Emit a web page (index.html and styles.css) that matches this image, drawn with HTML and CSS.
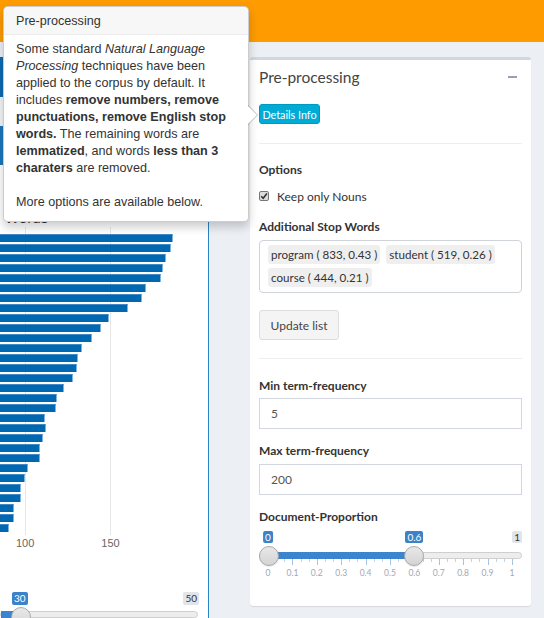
FILE: index.html
```html
<!DOCTYPE html>
<html lang="en">
<head>
<meta charset="utf-8">
<title>Pre-processing</title>
<link rel="stylesheet" href="styles.css">
</head>
<body>
<header class="topbar"></header>
<main class="content">
  <section class="lbox">
    <div class="lbox-head"></div>
    <div class="lbox-strip"></div>
    <div class="lbox-tab"></div>
    <div class="chart">
      <div class="chart-title">Words</div>
      <div class="plot">
        <div class="bar" style="width:173px"></div>
        <div class="bar" style="width:171px"></div>
        <div class="bar" style="width:166px"></div>
        <div class="bar" style="width:163px"></div>
        <div class="bar" style="width:161px"></div>
        <div class="bar" style="width:146px"></div>
        <div class="bar" style="width:142px"></div>
        <div class="bar" style="width:128px"></div>
        <div class="bar" style="width:109px"></div>
        <div class="bar" style="width:101px"></div>
        <div class="bar" style="width:92px"></div>
        <div class="bar" style="width:82px"></div>
        <div class="bar" style="width:78px"></div>
        <div class="bar" style="width:77px"></div>
        <div class="bar" style="width:73px"></div>
        <div class="bar" style="width:64px"></div>
        <div class="bar" style="width:57px"></div>
        <div class="bar" style="width:56px"></div>
        <div class="bar" style="width:45px"></div>
        <div class="bar" style="width:46px"></div>
        <div class="bar" style="width:43px"></div>
        <div class="bar" style="width:40px"></div>
        <div class="bar" style="width:40px"></div>
        <div class="bar" style="width:28px"></div>
        <div class="bar" style="width:25px"></div>
        <div class="bar" style="width:21px"></div>
        <div class="bar" style="width:21px"></div>
        <div class="bar" style="width:14px"></div>
        <div class="bar" style="width:14px"></div>
        <div class="bar" style="width:9px"></div>
      </div>
      <div class="axis"><span>100</span><span>150</span></div>
    </div>
    <div class="ls">
      <div class="ls-labels"><span class="lab-blue">30</span><span class="lab-gray">50</span></div>
      <div class="ls-track">
        <div class="ls-fill"></div>
        <div class="ls-handle"></div>
      </div>
    </div>
  </section>

  <section class="rbox">
    <div class="rbox-head">
      <h3 class="rbox-title">Pre-processing</h3>
      <span class="minus"></span>
    </div>
    <div class="rbox-body">
      <button class="btn-info">Details Info</button>
      <hr class="sep sep1">
      <div class="lbl lbl-options">Options</div>
      <div class="check-row">
        <span class="checkbox"><svg viewBox="0 0 10 10" width="10" height="10"><path d="M2.2 5.2 L4.2 7.3 L7.9 2.6" fill="none" stroke="#333" stroke-width="1.6"/></svg></span>
        <span>Keep only Nouns</span>
      </div>
      <div class="lbl lbl-stop">Additional Stop Words</div>
      <div class="selectize">
        <span class="item">program ( 833, 0.43 )</span>
        <span class="item">student ( 519, 0.26 )</span>
        <span class="item">course ( 444, 0.21 )</span>
      </div>
      <button class="btn-default">Update list</button>
      <hr class="sep sep2">
      <div class="lbl lbl-min">Min term-frequency</div>
      <div class="input input-min">5</div>
      <div class="lbl lbl-max">Max term-frequency</div>
      <div class="input input-max">200</div>
      <div class="lbl lbl-doc">Document-Proportion</div>
      <div class="rs">
        <div class="rs-labels">
          <div class="rs-scale">
            <span class="rs-lab rs-lab-blue" style="left:0%">0</span>
            <span class="rs-lab rs-lab-blue" style="left:60%">0.6</span>
            <span class="rs-lab rs-lab-max">1</span>
          </div>
        </div>
        <div class="rs-track">
          <div class="rs-scale">
            <div class="rs-fill" style="left:0%;width:60%"></div>
            <div class="rs-handle" style="left:0%"></div>
            <div class="rs-handle" style="left:60%"></div>
          </div>
        </div>
        <div class="rs-ticks"></div>
        <div class="rs-nums">
          <span>0</span><span>0.1</span><span>0.2</span><span>0.3</span><span>0.4</span><span>0.5</span><span>0.6</span><span>0.7</span><span>0.8</span><span>0.9</span><span>1</span>
        </div>
      </div>
    </div>
  </section>
</main>

<div class="popover">
  <div class="popover-title">Pre-processing</div>
  <div class="popover-content">
    Some standard <i>Natural Language</i><br>
    <i>Processing</i> techniques have been<br>
    applied to the corpus by default. It<br>
    includes <b>remove numbers, remove</b><br>
    <b>punctuations, remove English stop</b><br>
    <b>words.</b> The remaining words are<br>
    <b>lemmatized</b>, and words <b>less than 3</b><br>
    <b>charaters</b> are removed.<br>
    <br>
    More options are available below.
  </div>
</div>
</body>
</html>
```

FILE: styles.css
```css
* { box-sizing: border-box; margin: 0; padding: 0; }

body {
  width: 544px;
  height: 618px;
  overflow: hidden;
  position: relative;
  background: #ecf0f5;
  font-family: Lato, "Noto Sans", sans-serif;
  color: #333;
}

.topbar {
  height: 42px;
  background: #fe9b00;
}

.content {
  display: flex;
  align-items: flex-start;
  gap: 41px;
  padding-top: 15px;
}

/* ---------- left box ---------- */
.lbox {
  width: 209px;
  height: 561px;
  background: #fff;
  border-right: 1px solid #2a83c4;
  display: flex;
  flex-direction: column;
  overflow: hidden;
}
.lbox-head { height: 41px; background: #0c6bb3; }
.lbox-strip { height: 29px; background: #f4f6f9; }
.lbox-tab { height: 40px; background: #1a77bd; }

.chart { padding-top: 44px; }
.chart-title {
  font-family: "Liberation Sans", Arial, sans-serif;
  font-size: 15px;
  line-height: 18px;
  color: #333;
  padding-left: 5px;
}
.plot {
  display: flex;
  flex-direction: column;
  gap: 2px;
  padding: 7px 0 3px;
  background-image: linear-gradient(#e6e6e6, #e6e6e6), linear-gradient(#e6e6e6, #e6e6e6);
  background-size: 1px 100%, 1px 100%;
  background-position: 25px 0, 110px 0;
  background-repeat: no-repeat;
}
.bar {
  height: 8px;
  background: #0068b1;
  border-top: 1px solid #3f8ac6;
  border-right: 1px solid #7fb2dc;
}
.axis {
  display: flex;
  gap: 67px;
  padding-left: 16px;
  height: 14px;
  margin-top: 1px;
  font-family: "Liberation Sans", Arial, sans-serif;
  font-size: 11px;
  line-height: 14px;
  color: #666;
}

.ls { margin-top: 42px; }
.ls-labels {
  display: flex;
  justify-content: space-between;
  padding: 0 9px 0 12px;
  height: 13px;
}
.lab-blue, .lab-gray {
  font-size: 10px;
  line-height: 13px;
  padding: 0 2px;
  border-radius: 2px;
}
.lab-blue { background: #3b82c8; color: #fff; }
.lab-gray { background: #e1e4e9; color: #333; }
.ls-track {
  position: relative;
  margin-top: 6px;
  margin-right: 10px;
  height: 7px;
  background: #ededed;
  border: 1px solid #cfcfcf;
  border-radius: 4px;
}
.ls-fill {
  position: absolute;
  left: 0; top: -1px;
  width: 20px; height: 7px;
  background: #3d84cf;
}
.ls-handle {
  position: absolute;
  left: 10px; top: -5px;
  width: 20px; height: 20px;
  border-radius: 50%;
  background: linear-gradient(#e8e8e8, #d6d6d6);
  border: 1px solid #a9a9a9;
}

/* ---------- right box ---------- */
.rbox {
  width: 281px;
  height: 549px;
  background: #fff;
  border-top: 3px solid #d2d6de;
  border-radius: 3px;
  box-shadow: 0 1px 1px rgba(0,0,0,0.1);
}
.rbox-head {
  height: 34px;
  padding: 0 14px 0 9px;
  display: flex;
  align-items: center;
  justify-content: space-between;
}
.rbox-title {
  font-weight: 400;
  font-size: 15.5px;
  color: #444;
}
.minus {
  width: 9px;
  height: 2px;
  background: #97a0b3;
  margin-top: -1px;
}
.rbox-body {
  padding: 0 9px;
  display: flex;
  flex-direction: column;
  align-items: flex-start;
}

.btn-info {
  margin-top: 10px;
  height: 20px;
  width: 61px;
  background: #00acd6;
  border: 1px solid #009ac0;
  border-radius: 3px;
  color: #fff;
  font-family: Lato, "Noto Sans", sans-serif;
  font-size: 10.8px;
}

.sep {
  align-self: stretch;
  border: 0;
  height: 1px;
  background: #eee;
}
.sep1 { margin-top: 19px; }
.sep2 { margin-top: 18px; }

.lbl {
  font-weight: 700;
  font-size: 12px;
  line-height: 18px;
  color: #333;
}
.lbl-options { margin-top: 17px; }
.lbl-stop { margin-top: 13px; }
.lbl-min { margin-top: 18px; }
.lbl-max { margin-top: 13px; }
.lbl-doc { margin-top: 13px; }

.check-row {
  margin-top: 8px;
  height: 18px;
  display: flex;
  align-items: center;
  gap: 8px;
  font-size: 12px;
  color: #333;
}
.checkbox {
  width: 10px;
  height: 10px;
  border: 1px solid #767676;
  border-radius: 2px;
  background: #dcdcdc;
  display: flex;
}
.checkbox svg { margin: -1px; }

.selectize {
  margin-top: 4px;
  align-self: stretch;
  height: 53px;
  border: 1px solid #cfd3da;
  border-radius: 4px;
  padding: 4px 8px;
  display: flex;
  flex-wrap: wrap;
  align-content: flex-start;
  gap: 4px 6px;
}
.item {
  height: 19px;
  line-height: 19px;
  padding: 0 3px;
  background: #efefef;
  border-radius: 3px;
  font-size: 11.6px;
  color: #333;
}

.btn-default {
  margin-top: 17px;
  height: 30px;
  width: 80px;
  background: #f4f4f4;
  border: 1px solid #ddd;
  border-radius: 3px;
  color: #444;
  font-family: Lato, "Noto Sans", sans-serif;
  font-size: 12px;
}

.input {
  align-self: stretch;
  height: 31px;
  border: 1px solid #d2d6de;
  padding-left: 11px;
  font-size: 12px;
  line-height: 29px;
  color: #555;
}
.input-min { margin-top: 3px; }
.input-max { margin-top: 4px; }

/* range slider */
.rs { align-self: stretch; margin-top: 5px; }
.rs-scale {
  position: absolute;
  top: 0; bottom: 0;
  left: 9px; right: 10px;
}
.rs-labels { position: relative; height: 12px; }
.rs-lab {
  position: absolute;
  top: 0;
  height: 12px;
  line-height: 12px;
  padding: 0 2px;
  font-size: 10px;
  border-radius: 2px;
  transform: translateX(-50%);
}
.rs-lab-blue { background: #3b82c8; color: #fff; z-index: 1; }
.rs-lab-max { right: -10px; transform: none; background: #e1e4e9; color: #333; }
.rs-track {
  position: relative;
  margin-top: 9px;
  height: 7px;
  background: #ededed;
  border: 1px solid #cfcfcf;
  border-radius: 4px;
}
.rs-fill {
  position: absolute;
  top: -1px;
  height: 7px;
  background: #3d84cf;
}
.rs-handle {
  position: absolute;
  top: -7px;
  width: 20px;
  height: 20px;
  margin-left: -10px;
  border-radius: 50%;
  background: linear-gradient(#e8e8e8, #d4d4d4);
  border: 1px solid #a9a9a9;
  box-shadow: 0 1px 1px rgba(0,0,0,0.1);
}
.rs-ticks {
  margin-left: 9px;
  width: 245px;
  height: 6px;
  background-image:
    repeating-linear-gradient(to right, #a6c2df 0 1px, transparent 1px 24.4px),
    repeating-linear-gradient(to right, #c2d4e8 0 1px, transparent 1px 8.1333px);
  background-size: 100% 6px, 100% 3px;
  background-repeat: no-repeat;
}
.rs-nums {
  margin-top: 3px;
  margin-left: -1px;
  display: flex;
  justify-content: space-between;
}
.rs-nums span {
  width: 20px;
  text-align: center;
  font-size: 8.5px;
  line-height: 10px;
  color: #a0a8b5;
}

/* ---------- popover ---------- */
.popover {
  position: absolute;
  left: 3px;
  top: 6px;
  width: 246px;
  height: 216px;
  background: #fff;
  border: 1px solid rgba(0,0,0,0.2);
  border-radius: 5px;
  box-shadow: 0 5px 10px rgba(0,0,0,0.2);
  font-family: "Liberation Sans", Arial, sans-serif;
  font-size: 12.6px;
  color: #333;
  z-index: 10;
}
.popover::before, .popover::after {
  content: "";
  position: absolute;
  top: 98px;
  border-style: solid;
  border-color: transparent;
}
.popover::before {
  right: -10px;
  border-width: 10px 0 10px 10px;
  border-left-color: rgba(0,0,0,0.25);
}
.popover::after {
  right: -9px;
  top: 99px;
  border-width: 9px 0 9px 9px;
  border-left-color: #fff;
}
.popover-title {
  height: 28px;
  line-height: 28px;
  padding: 0 12px;
  background: #f7f7f7;
  border-bottom: 1px solid #ebebeb;
  border-radius: 5px 5px 0 0;
}
.popover-content {
  padding: 6px 12px 10px;
  line-height: 17px;
  white-space: nowrap;
}
```
